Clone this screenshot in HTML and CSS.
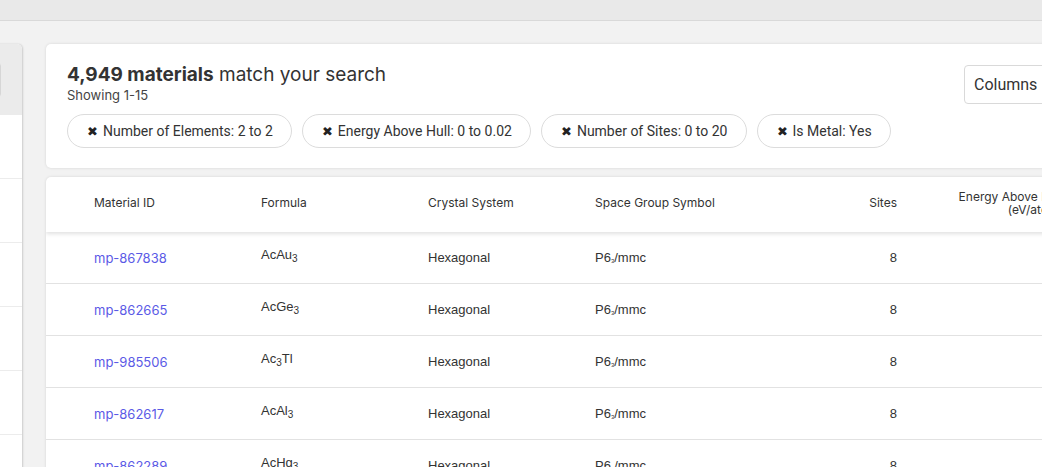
FILE: index.html
```html
<!DOCTYPE html>
<html lang="en">
<head>
    <meta charset="UTF-8">
    <meta name="viewport" content="width=device-width, initial-scale=1.0">
    <link rel="stylesheet" href="styles.css">
    <title>Materials Explorer</title>
</head>
<body>
    <div class="topbar"></div>
    <div class="layout">
        <!-- filter sidebar, mostly scrolled out of view -->
        <aside class="sidebar">
            <div class="sidebar-search">
                <input type="text" class="sidebar-input">
            </div>
            <div class="sidebar-item"></div>
            <div class="sidebar-item"></div>
            <div class="sidebar-item"></div>
            <div class="sidebar-item"></div>
            <div class="sidebar-item"></div>
            <div class="sidebar-item"></div>
        </aside>

        <main class="main">
            <section class="card summary">
                <div class="summary-top">
                    <div>
                        <h2 class="summary-title"><strong>4,949 materials</strong> match your search</h2>
                        <div class="summary-sub">Showing 1-15</div>
                    </div>
                    <button class="columns-btn">Columns</button>
                </div>
                <div class="chips">
                    <span class="chip"><span class="chip-x">&#10006;</span>Number of Elements: 2 to 2</span>
                    <span class="chip"><span class="chip-x">&#10006;</span>Energy Above Hull: 0 to 0.02</span>
                    <span class="chip"><span class="chip-x">&#10006;</span>Number of Sites: 0 to 20</span>
                    <span class="chip"><span class="chip-x">&#10006;</span>Is Metal: Yes</span>
                </div>
            </section>

            <section class="card results">
                <div class="row head">
                    <div class="cell">Material ID</div>
                    <div class="cell">Formula</div>
                    <div class="cell">Crystal System</div>
                    <div class="cell">Space Group Symbol</div>
                    <div class="cell num">Sites</div>
                    <div class="cell num">Energy Above Hull<br>(eV/atom)</div>
                </div>
                <div class="row">
                    <div class="cell"><a href="#" class="mat-link">mp-867838</a></div>
                    <div class="cell formula">AcAu<sub>3</sub></div>
                    <div class="cell">Hexagonal</div>
                    <div class="cell">P6<sub class="tiny">3</sub>/mmc</div>
                    <div class="cell num">8</div>
                    <div class="cell num">0</div>
                </div>
                <div class="row">
                    <div class="cell"><a href="#" class="mat-link">mp-862665</a></div>
                    <div class="cell formula">AcGe<sub>3</sub></div>
                    <div class="cell">Hexagonal</div>
                    <div class="cell">P6<sub class="tiny">3</sub>/mmc</div>
                    <div class="cell num">8</div>
                    <div class="cell num">0</div>
                </div>
                <div class="row">
                    <div class="cell"><a href="#" class="mat-link">mp-985506</a></div>
                    <div class="cell formula">Ac<sub>3</sub>Tl</div>
                    <div class="cell">Hexagonal</div>
                    <div class="cell">P6<sub class="tiny">3</sub>/mmc</div>
                    <div class="cell num">8</div>
                    <div class="cell num">0</div>
                </div>
                <div class="row">
                    <div class="cell"><a href="#" class="mat-link">mp-862617</a></div>
                    <div class="cell formula">AcAl<sub>3</sub></div>
                    <div class="cell">Hexagonal</div>
                    <div class="cell">P6<sub class="tiny">3</sub>/mmc</div>
                    <div class="cell num">8</div>
                    <div class="cell num">0</div>
                </div>
                <div class="row">
                    <div class="cell"><a href="#" class="mat-link">mp-862289</a></div>
                    <div class="cell formula">AcHg<sub>3</sub></div>
                    <div class="cell">Hexagonal</div>
                    <div class="cell">P6<sub class="tiny">3</sub>/mmc</div>
                    <div class="cell num">8</div>
                    <div class="cell num">0</div>
                </div>
            </section>
        </main>
    </div>
</body>
</html>
```

FILE: styles.css
```css
body {
    margin: 0;
    padding: 0;
    background-color: #f2f2f2;
    font-family: Inter, "Liberation Sans", sans-serif;
    color: #333;
    overflow: hidden;
    height: 467px;
}

.topbar {
    height: 20px;
    background-color: #e9e9e9;
    border-bottom: 1px solid #d9d9d9;
}

.layout {
    display: flex;
    align-items: flex-start;
    gap: 24px;
    padding-top: 23px;
}

/* Sidebar - only its right edge shows */
.sidebar {
    flex-shrink: 0;
    width: 260px;
    margin-left: -238px;
    background-color: white;
    border-radius: 0 5px 0 0;
    box-shadow: 1px 0 2px rgba(0, 0, 0, 0.16);
    height: 500px;
    overflow: hidden;
}

.sidebar-search {
    height: 71px;
    background-color: #ebebeb;
    padding: 18px 21px 0 16px;
    box-sizing: border-box;
}

.sidebar-input {
    display: block;
    width: 100%;
    height: 36px;
    box-sizing: border-box;
    border: 1px solid #d6d6d6;
    border-radius: 4px;
    background-color: white;
}

.sidebar-item {
    height: 63px;
    border-bottom: 1px solid #ececec;
}

/* Main column */
.main {
    flex-shrink: 0;
    width: 1048px;
    display: flex;
    flex-direction: column;
    gap: 9px;
}

.card {
    background-color: white;
    border-radius: 5px;
    box-shadow: 0 0 3px rgba(0, 0, 0, 0.12);
}

.summary {
    padding: 19px 20px 20px 21px;
}

.summary-top {
    display: flex;
    justify-content: space-between;
    align-items: flex-start;
}

.summary-title {
    margin: 0;
    font-size: 19px;
    line-height: 24px;
    font-weight: normal;
    color: #333;
}

.summary-title strong {
    font-weight: 700;
}

.summary-sub {
    font-size: 13px;
    line-height: 16px;
    color: #444;
}

.columns-btn {
    margin-top: 2px;
    width: 110px;
    height: 39px;
    text-align: left;
    padding: 0 9px;
    font-family: Roboto, sans-serif;
    font-size: 16px;
    color: #333;
    background-color: white;
    border: 1px solid #d9d9d9;
    border-radius: 4px;
}

.chips {
    display: flex;
    gap: 10px;
    margin-top: 10px;
}

.chip {
    display: inline-flex;
    align-items: center;
    height: 34px;
    box-sizing: border-box;
    padding: 0 18px 0 19px;
    border: 1px solid #dcdcdc;
    border-radius: 17px;
    font-family: Roboto, sans-serif;
    font-size: 14px;
    color: #333;
}

.chip-x {
    font-size: 13px;
    margin-right: 5px;
    color: #222;
}

/* Results table */
.results {
    overflow: hidden;
}

.row {
    display: grid;
    grid-template-columns: 167px 167px 167px 167px 167px 166px;
    padding-left: 32px;
    height: 51px;
    align-items: center;
    border-bottom: 1px solid #e2e2e2;
    font-family: "Liberation Sans", Arial, sans-serif;
    font-size: 13px;
    color: #333;
}

.row.head {
    position: relative;
    height: 51px;
    padding-bottom: 4px;
    border-bottom: none;
    box-shadow: 0 2px 4px rgba(0, 0, 0, 0.12);
    font-family: Inter, sans-serif;
    font-size: 12px;
    line-height: 13px;
    color: #333;
}

.cell {
    padding: 0 16px;
    white-space: nowrap;
}

.num {
    text-align: right;
}

.mat-link {
    font-family: Inter, sans-serif;
    color: #5b5ae6;
    text-decoration: none;
}

.formula {
    margin-top: -6px;
}

sub {
    font-size: 10px;
    vertical-align: -3px;
    line-height: 0;
}

sub.tiny {
    font-size: 6px;
    vertical-align: -1px;
}
```
